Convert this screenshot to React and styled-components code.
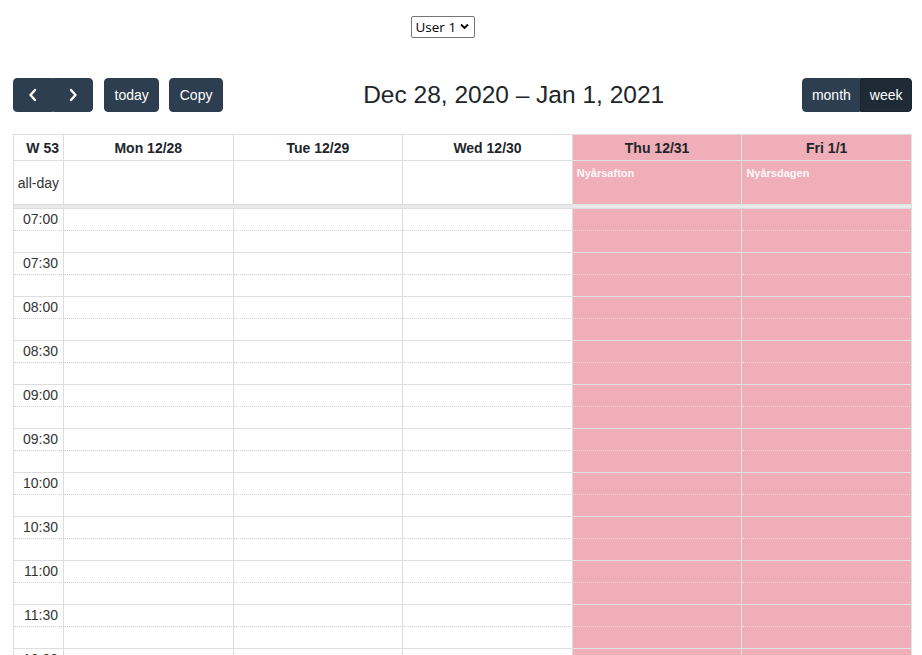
import React from 'react';
import styled, { createGlobalStyle, css } from 'styled-components';

const GlobalStyle = createGlobalStyle`
  html, body {
    margin: 0;
    padding: 0;
    background: #fff;
    overflow: hidden;
  }
  body {
    font-family: 'Liberation Sans', Arial, sans-serif;
    font-size: 14px;
    color: #212529;
  }
`;

const pink = '#f0aeb9';
const line = '#dddddd';

const Page = styled.div`
  padding: 16px 10px 0 13px;
  height: 655px;
  box-sizing: border-box;
  overflow: hidden;
`;

const UserBar = styled.div`
  display: flex;
  justify-content: center;
  padding-right: 40px;
`;

const SelectWrap = styled.label`
  position: relative;
  display: inline-flex;
`;

const UserSelect = styled.select`
  appearance: none;
  font-family: 'Open Sans', 'Noto Sans', sans-serif;
  font-size: 13.5px;
  color: #000;
  background: #fff;
  border: 1px solid #767676;
  border-radius: 2px;
  height: 22px;
  width: 64px;
  padding: 0 0 0 4px;
  line-height: 20px;
  outline: none;
`;

const SelectArrow = styled.svg`
  position: absolute;
  right: 6px;
  top: 7px;
  pointer-events: none;
`;

const Toolbar = styled.div`
  display: flex;
  align-items: center;
  justify-content: space-between;
  margin-top: 40px;
  margin-bottom: 22px;
`;

const Chunk = styled.div`
  display: flex;
  align-items: center;
  gap: 10px;
`;

const Group = styled.div`
  display: inline-flex;
  margin-right: ${p => p.$gap || 0}px;
  & > button:not(:first-child) {
    border-top-left-radius: 0;
    border-bottom-left-radius: 0;
  }
  & > button:not(:last-child) {
    border-top-right-radius: 0;
    border-bottom-right-radius: 0;
  }
`;

const Button = styled.button`
  display: inline-flex;
  align-items: center;
  justify-content: center;
  height: 34px;
  padding: 0 ${p => (p.$icon ? '0' : p.$tight ? '8.5px' : '9.5px')};
  width: ${p => (p.$icon ? '40px' : 'auto')};
  font-family: 'Liberation Sans', Arial, sans-serif;
  font-size: 14px;
  color: #fff;
  background: ${p => (p.$active ? '#1e2b37' : '#2c3e50')};
  border: 1px solid ${p => (p.$active ? '#1a252f' : '#2c3e50')};
  border-radius: 4px;
  cursor: pointer;
`;

const Title = styled.h2`
  margin: 0 0 0 2px;
  font-size: 24.5px;
  font-weight: 400;
  color: #212529;
`;

const Calendar = styled.div`
  border-top: 1px solid ${line};
  border-left: 1px solid ${line};
`;

const Row = styled.div`
  display: grid;
  grid-template-columns: 50px repeat(5, 1fr);
`;

const Cell = styled.div`
  box-sizing: border-box;
  border-right: 1px solid ${p => (p.$hl ? '#dbe6e2' : line)};
  border-bottom: 1px solid ${line};
  background: ${p => (p.$hl ? pink : '#fff')};
  ${p =>
    p.$hl &&
    css`
      border-bottom-color: #dce7e3;
    `}
`;

const HeadCell = styled(Cell)`
  height: 26px;
  display: flex;
  align-items: center;
  justify-content: ${p => (p.$axis ? 'flex-end' : 'center')};
  padding-right: ${p => (p.$axis ? '4px' : '0')};
  font-weight: 700;
  color: #212529;
`;

const AllDayCell = styled(Cell)`
  height: 44px;
  display: flex;
  align-items: ${p => (p.$axis ? 'center' : 'flex-start')};
  justify-content: ${p => (p.$axis ? 'flex-end' : 'flex-start')};
  padding: ${p => (p.$axis ? '0 4px 0 0' : '6px 0 0 4px')};
  color: #333;
`;

const Holiday = styled.span`
  font-size: 11px;
  font-weight: 700;
  color: #fff;
  opacity: 0.92;
`;

const Divider = styled.div`
  height: 3px;
  background: #e9e9e9;
  border-bottom: 1px solid ${line};
  border-right: 1px solid ${line};
`;

const SlotCell = styled(Cell)`
  height: 22px;
  ${p =>
    p.$minor &&
    css`
      border-bottom: 1px dotted ${p.$hl ? '#f7d3d9' : '#cfcfcf'};
    `}
  ${p =>
    p.$axis &&
    css`
      display: flex;
      align-items: center;
      justify-content: flex-end;
      padding: 0 5px 1px 0;
      color: #333;
    `}
`;

const days = [
  { label: 'Mon 12/28' },
  { label: 'Tue 12/29' },
  { label: 'Wed 12/30' },
  { label: 'Thu 12/31', hl: true, holiday: 'Nyårsafton' },
  { label: 'Fri 1/1', hl: true, holiday: 'Nyårsdagen' },
];

const times = [];
for (let h = 7; h < 14; h++) {
  const hh = String(h).padStart(2, '0');
  times.push(`${hh}:00`, `${hh}:30`);
}

const Chevron = ({ dir }) => (
  <svg width="10" height="14" viewBox="0 0 10 14">
    <path
      d={dir === 'left' ? 'M7 2 L2.5 7 L7 12' : 'M3 2 L7.5 7 L3 12'}
      fill="none"
      stroke="#fff"
      strokeWidth="2.4"
      strokeLinecap="round"
      strokeLinejoin="round"
    />
  </svg>
);

export default function App() {
  return (
    <Page>
      <GlobalStyle />
      <UserBar>
        <SelectWrap>
          <UserSelect defaultValue="1">
            <option value="1">User 1</option>
            <option value="2">User 2</option>
          </UserSelect>
          <SelectArrow width="9" height="7" viewBox="0 0 9 7">
            <path d="M1 1.5 L4.5 5 L8 1.5" fill="none" stroke="#000" strokeWidth="1.8" />
          </SelectArrow>
        </SelectWrap>
      </UserBar>

      <Toolbar>
        <Chunk>
          <Group $gap={1}>
            <Button $icon aria-label="prev">
              <Chevron dir="left" />
            </Button>
            <Button $icon aria-label="next">
              <Chevron dir="right" />
            </Button>
          </Group>
          <Button>today</Button>
          <Button>Copy</Button>
        </Chunk>
        <Title>Dec 28, 2020 – Jan 1, 2021</Title>
        <Chunk>
          <Group>
            <Button $tight>month</Button>
            <Button $tight $active>
              week
            </Button>
          </Group>
        </Chunk>
      </Toolbar>

      <Calendar>
        <Row>
          <HeadCell $axis>W 53</HeadCell>
          {days.map(d => (
            <HeadCell key={d.label} $hl={d.hl}>
              {d.label}
            </HeadCell>
          ))}
        </Row>
        <Row>
          <AllDayCell $axis>all-day</AllDayCell>
          {days.map(d => (
            <AllDayCell key={d.label} $hl={d.hl}>
              {d.holiday && <Holiday>{d.holiday}</Holiday>}
            </AllDayCell>
          ))}
        </Row>
        <Divider />
        {times.map(t => (
          <React.Fragment key={t}>
            <Row>
              <SlotCell $axis $minor>
                {t}
              </SlotCell>
              {days.map(d => (
                <SlotCell key={d.label} $minor $hl={d.hl} />
              ))}
            </Row>
            <Row>
              <SlotCell $axis />
              {days.map(d => (
                <SlotCell key={d.label} $hl={d.hl} />
              ))}
            </Row>
          </React.Fragment>
        ))}
      </Calendar>
    </Page>
  );
}
